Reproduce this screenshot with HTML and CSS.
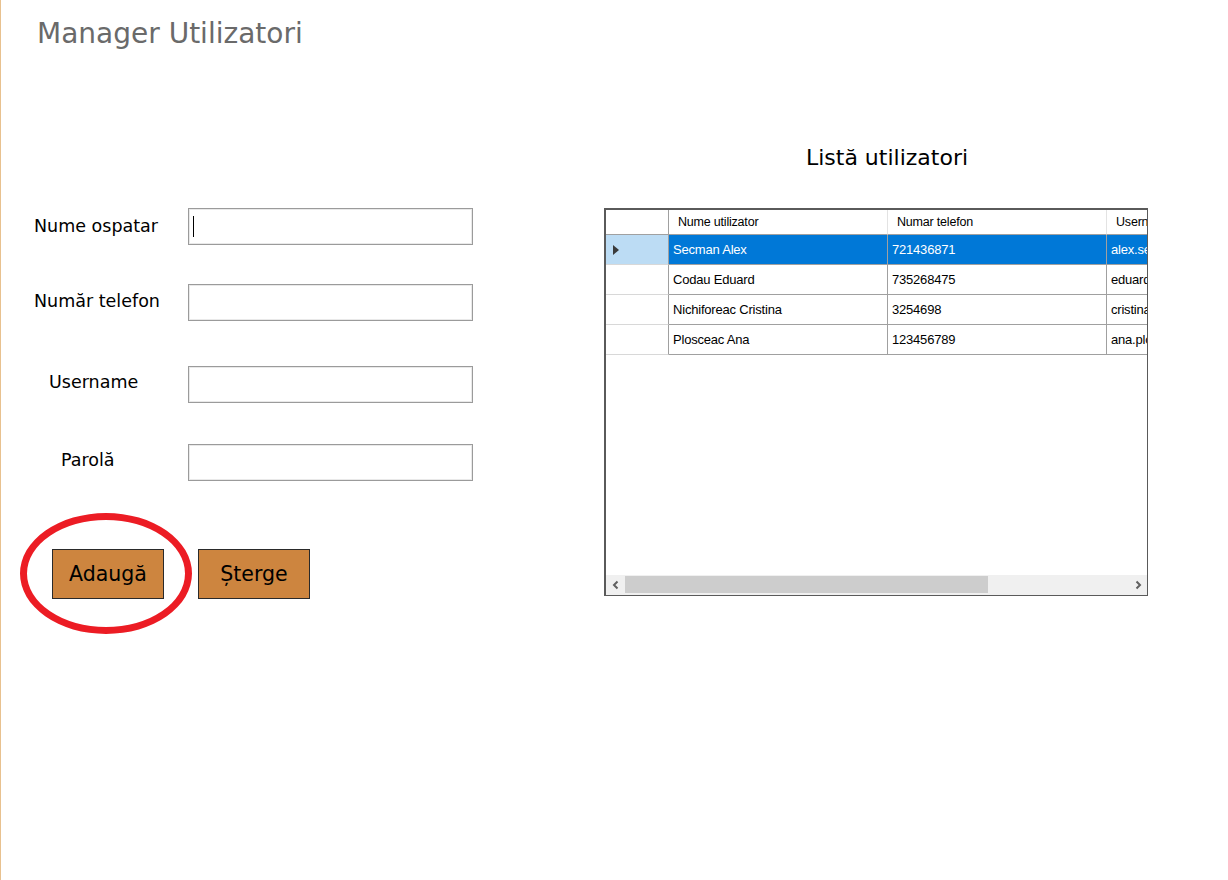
FILE: index.html
```html
<!DOCTYPE html>
<html lang="ro">
<head>
<meta charset="utf-8">
<title>Manager Utilizatori</title>
<link rel="stylesheet" href="styles.css">
</head>
<body>
<div class="window">
  <header class="header">
    <h1 class="title">Manager Utilizatori</h1>
  </header>
  <main class="content">
    <section class="form-panel">
      <div class="field field-1">
        <label class="label label-first">Nume ospatar</label>
        <div class="input focused"><span class="caret"></span></div>
      </div>
      <div class="field field-2">
        <label class="label">Număr telefon</label>
        <div class="input"></div>
      </div>
      <div class="field field-3">
        <label class="label indent-user">Username</label>
        <div class="input"></div>
      </div>
      <div class="field field-4">
        <label class="label indent-pass">Parolă</label>
        <div class="input"></div>
      </div>
      <div class="buttons">
        <div class="btn-wrap">
          <button class="btn">Adaugă</button>
          <span class="highlight-ring"></span>
        </div>
        <button class="btn">Șterge</button>
      </div>
    </section>
    <section class="list-panel">
      <h2 class="list-title">Listă utilizatori</h2>
      <div class="grid">
        <div class="grid-table">
          <div class="row header-row">
            <div class="rowhead"></div>
            <div class="cell hcell">Nume utilizator</div>
            <div class="cell hcell">Numar telefon</div>
            <div class="cell hcell">Username</div>
          </div>
          <div class="row selected">
            <div class="rowhead"><span class="pointer"></span></div>
            <div class="cell">Secman Alex</div>
            <div class="cell">721436871</div>
            <div class="cell">alex.secman</div>
          </div>
          <div class="row">
            <div class="rowhead"></div>
            <div class="cell">Codau Eduard</div>
            <div class="cell">735268475</div>
            <div class="cell">eduard.codau</div>
          </div>
          <div class="row">
            <div class="rowhead"></div>
            <div class="cell">Nichiforeac Cristina</div>
            <div class="cell">3254698</div>
            <div class="cell">cristina.n</div>
          </div>
          <div class="row">
            <div class="rowhead"></div>
            <div class="cell">Plosceac Ana</div>
            <div class="cell">123456789</div>
            <div class="cell">ana.plosceac</div>
          </div>
        </div>
        <div class="hscroll">
          <span class="arrow">
            <svg width="10" height="10" viewBox="0 0 10 10"><path d="M6.5 1.5 L3 5 L6.5 8.5" fill="none" stroke="#606060" stroke-width="2"/></svg>
          </span>
          <div class="track"><div class="thumb"></div></div>
          <span class="arrow">
            <svg width="10" height="10" viewBox="0 0 10 10"><path d="M3.5 1.5 L7 5 L3.5 8.5" fill="none" stroke="#606060" stroke-width="2"/></svg>
          </span>
        </div>
      </div>
    </section>
  </main>
</div>
</body>
</html>
```
FILE: styles.css
```css
* { box-sizing: border-box; }

html, body {
  margin: 0;
  padding: 0;
  background: #ffffff;
}

.window {
  width: 1228px;
  height: 880px;
  border-left: 1px solid #e8c18f;
  font-family: "DejaVu Sans", sans-serif;
  color: #000;
  overflow: hidden;
}

.header {
  height: 143px;
  padding: 15px 0 0 36px;
}

.title {
  margin: 0;
  font-size: 28px;
  line-height: 38px;
  font-weight: normal;
  color: #6a6a6a;
}

.content {
  display: flex;
}

.form-panel {
  width: 603px;
  padding: 65px 0 0 33px;
  display: flex;
  flex-direction: column;
}

.field {
  display: flex;
  align-items: center;
  height: 37px;
}
.field-2 { margin-top: 39px; }
.field-3 { margin-top: 45px; }
.field-4 { margin-top: 41px; }

.label {
  width: 154px;
  font-size: 17.5px;
  line-height: 22px;
  margin-top: -3px;
  white-space: nowrap;
}
.label-first { margin-top: -1px; }
.indent-user { padding-left: 15px; margin-top: -6px; }
.indent-pass { padding-left: 27px; margin-top: -6px; }

.input {
  width: 285px;
  height: 37px;
  border: 1px solid #9b9b9b;
  box-shadow: inset 0 0 0 1px #e9e9e9;
  background: #fff;
  position: relative;
}
.caret {
  position: absolute;
  left: 4px;
  top: 7px;
  width: 1px;
  height: 21px;
  background: #000;
}

.buttons {
  display: flex;
  gap: 34px;
  margin-top: 68px;
  padding-left: 18px;
}

.btn-wrap {
  position: relative;
  display: flex;
}

.btn {
  width: 112px;
  height: 50px;
  background: #cd853f;
  border: 1px solid #2a2a2a;
  font-family: "DejaVu Sans", sans-serif;
  font-size: 20.5px;
  color: #000;
  padding: 0;
  margin: 0;
}

.highlight-ring {
  position: absolute;
  left: -32px;
  top: -36px;
  width: 172px;
  height: 121px;
  border: 7px solid #ec1c24;
  border-radius: 50%;
  pointer-events: none;
}

.list-panel {
  display: flex;
  flex-direction: column;
}

.list-title {
  margin: 0;
  width: 544px;
  text-align: center;
  font-size: 22px;
  line-height: 30px;
  font-weight: normal;
  color: #000;
  padding-left: 22px;
  white-space: nowrap;
}

.grid {
  margin-top: 35px;
  width: 544px;
  height: 388px;
  border: 1px solid #5a5a5a;
  border-top-width: 2px;
  border-left-width: 2px;
  display: flex;
  flex-direction: column;
  overflow: hidden;
  font-family: "Liberation Sans", sans-serif;
  font-size: 13px;
}

.grid-table {
  flex: 1;
  overflow: hidden;
  background: #fff;
}

.row {
  display: flex;
  height: 30px;
  width: 720px;
}

.header-row {
  height: 25px;
}

.rowhead {
  width: 63px;
  flex: none;
  border-right: 1px solid #a0a0a0;
  border-bottom: 1px solid #d8d8d8;
  background: #fff;
  display: flex;
  align-items: center;
  padding-left: 7px;
}

.header-row .rowhead {
  border-bottom: 1px solid #a0a0a0;
}

.cell {
  width: 219px;
  flex: none;
  border-right: 1px solid #a0a0a0;
  border-bottom: 1px solid #a0a0a0;
  display: flex;
  align-items: center;
  padding-left: 4px;
  color: #000;
  white-space: nowrap;
  letter-spacing: -0.2px;
}

.hcell {
  padding-left: 9px;
  border-right: 1px solid #e3e3e3;
  border-bottom: 1px solid #a0a0a0;
  font-size: 12.5px;
}

.selected .rowhead {
  background: #bcdcf4;
}
.selected .cell {
  background: #0078d7;
  color: #fff;
}

.pointer {
  width: 0;
  height: 0;
  border-top: 5px solid transparent;
  border-bottom: 5px solid transparent;
  border-left: 6px solid #3a3a3a;
}

.hscroll {
  height: 20px;
  display: flex;
  background: #f0f0f0;
  flex: none;
}

.arrow {
  width: 19px;
  display: flex;
  align-items: center;
  justify-content: center;
  flex: none;
}

.track {
  flex: 1;
  padding: 1px 0 2px 0;
}

.thumb {
  width: 363px;
  height: 100%;
  background: #cdcdcd;
}
```
